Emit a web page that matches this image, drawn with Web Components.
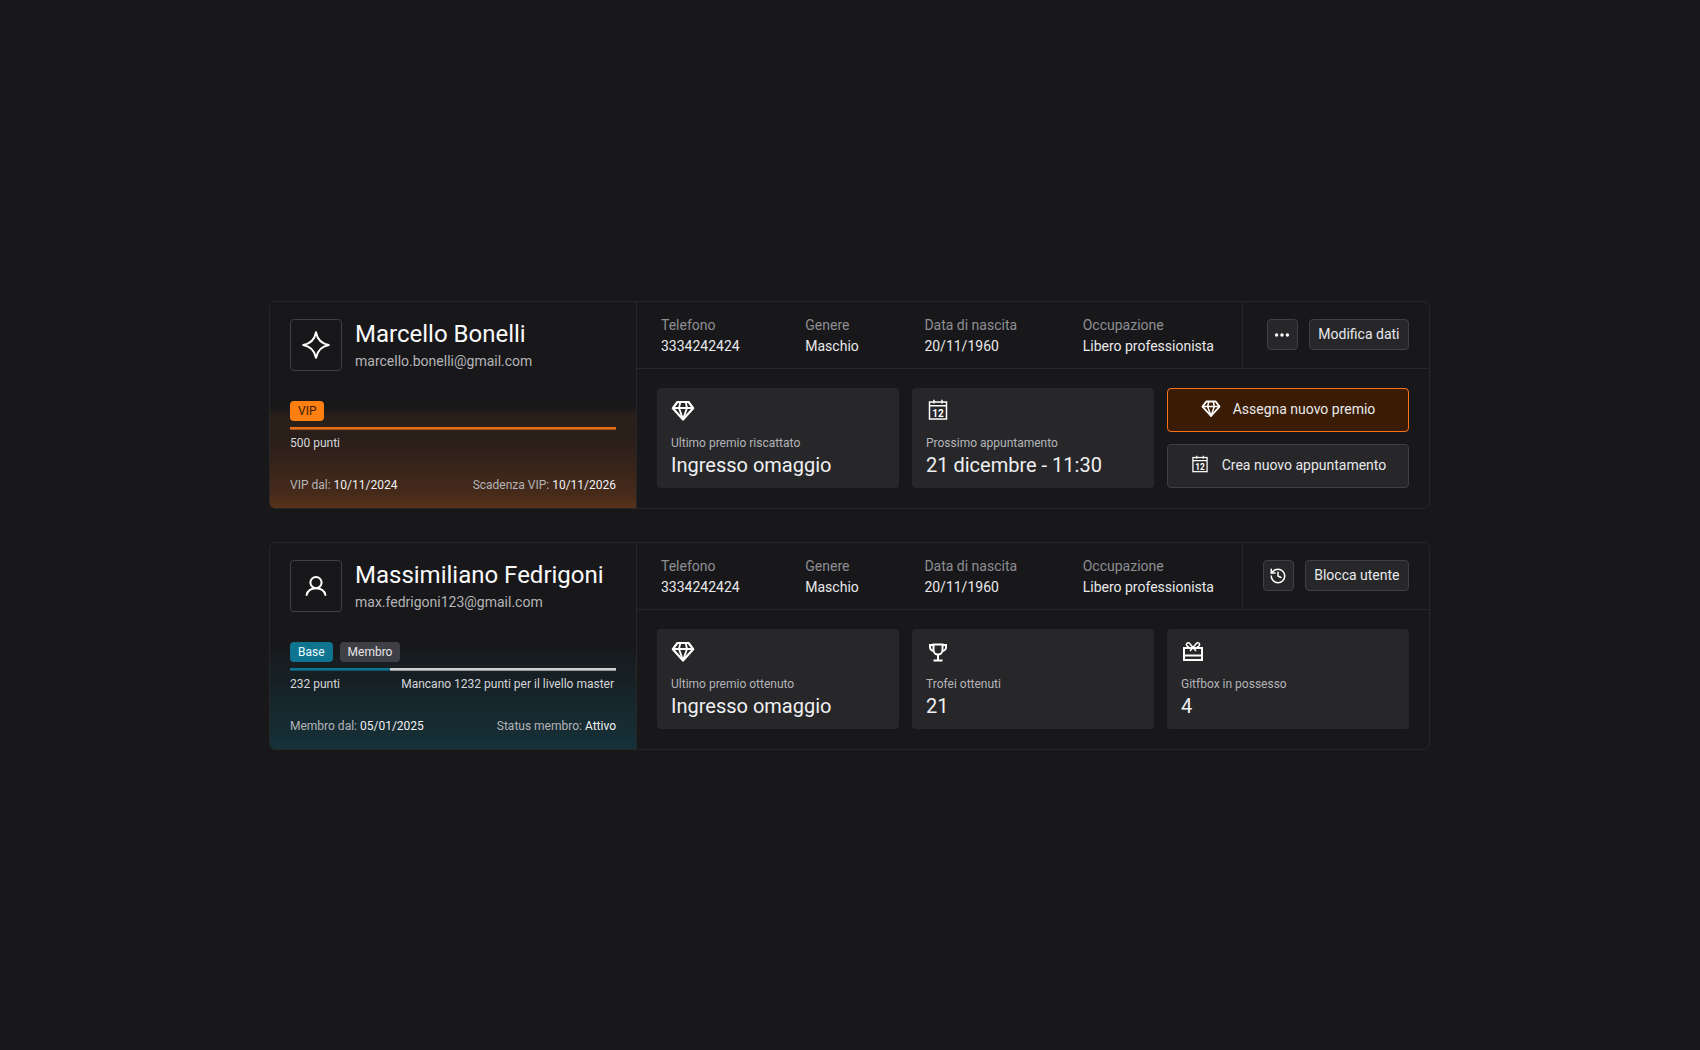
<!doctype html>
<html lang="it">
<head>
<meta charset="utf-8">
<title>Clienti</title>
<style>
html,body{margin:0;height:100%;background:#18181a;}
body{font-family:Roboto,"Liberation Sans",sans-serif;color:#f4f4f5;}
.page{height:1050px;padding-right:1px;box-sizing:border-box;display:flex;flex-direction:column;justify-content:center;align-items:center;gap:33px;}
</style>
</head>
<body>
<main class="page">
  <member-card tone="vip" name="Marcello Bonelli" email="marcello.bonelli@gmail.com" progress="100">
    <ui-icon slot="avatar" name="star" size="32"></ui-icon>
    <ui-badge slot="badges" kind="vip">VIP</ui-badge>
    <span slot="points">500 punti</span>
    <span slot="since">VIP dal: <b>10/11/2024</b></span>
    <span slot="until">Scadenza VIP: <b>10/11/2026</b></span>
    <info-field slot="fields" label="Telefono">3334242424</info-field>
    <info-field slot="fields" label="Genere">Maschio</info-field>
    <info-field slot="fields" label="Data di nascita">20/11/1960</info-field>
    <info-field slot="fields" label="Occupazione">Libero professionista</info-field>
    <ui-button slot="actions" square><ui-icon name="dots" size="18"></ui-icon></ui-button>
    <ui-button slot="actions">Modifica dati</ui-button>
    <stat-tile slot="stats" label="Ultimo premio riscattato" value="Ingresso omaggio"><ui-icon name="diamond" size="24"></ui-icon></stat-tile>
    <stat-tile slot="stats" label="Prossimo appuntamento" value="21 dicembre - 11:30"><ui-icon name="calendar" size="24"></ui-icon></stat-tile>
    <action-stack slot="stats">
      <ui-button large kind="primary"><ui-icon name="diamond" size="20"></ui-icon>Assegna nuovo premio</ui-button>
      <ui-button large><ui-icon name="calendar" size="20"></ui-icon>Crea nuovo appuntamento</ui-button>
    </action-stack>
  </member-card>

  <member-card tone="base" name="Massimiliano Fedrigoni" email="max.fedrigoni123@gmail.com" progress="30.7">
    <ui-icon slot="avatar" name="user" size="32"></ui-icon>
    <ui-badge slot="badges" kind="base">Base</ui-badge>
    <ui-badge slot="badges" kind="member">Membro</ui-badge>
    <span slot="points">232 punti</span>
    <span slot="remaining">Mancano 1232 punti per il livello master</span>
    <span slot="since">Membro dal: <b>05/01/2025</b></span>
    <span slot="until">Status membro: <b>Attivo</b></span>
    <info-field slot="fields" label="Telefono">3334242424</info-field>
    <info-field slot="fields" label="Genere">Maschio</info-field>
    <info-field slot="fields" label="Data di nascita">20/11/1960</info-field>
    <info-field slot="fields" label="Occupazione">Libero professionista</info-field>
    <ui-button slot="actions" square><ui-icon name="history" size="18"></ui-icon></ui-button>
    <ui-button slot="actions">Blocca utente</ui-button>
    <stat-tile slot="stats" label="Ultimo premio ottenuto" value="Ingresso omaggio"><ui-icon name="diamond" size="24"></ui-icon></stat-tile>
    <stat-tile slot="stats" label="Trofei ottenuti" value="21"><ui-icon name="trophy" size="24"></ui-icon></stat-tile>
    <stat-tile slot="stats" label="Gitfbox in possesso" value="4"><ui-icon name="gift" size="24"></ui-icon></stat-tile>
  </member-card>
</main>

<script>
const ICONS = {
  star: '<svg viewBox="0 0 32 32" fill="none" stroke="currentColor" stroke-width="2" stroke-linejoin="round"><path d="M16 3.200Q18 14 28.800 16 18 18 16 28.800 14 18 3.200 16 14 14 16 3.200Z"/></svg>',
  user: '<svg viewBox="0 0 32 32" fill="none" stroke="currentColor" stroke-width="2" stroke-linecap="round"><circle cx="16" cy="12.600" r="5.600"/><path d="M6.600 25C7.600 20.600 11 18.200 16 18.200S24.400 20.600 25.400 25"/></svg>',
  dots: '<svg viewBox="0 0 18 18" fill="currentColor"><circle cx="3.600" cy="9" r="1.700"/><circle cx="9" cy="9" r="1.700"/><circle cx="14.400" cy="9" r="1.700"/></svg>',
  diamond: '<svg viewBox="0 0 24 24" fill="none" stroke="currentColor" stroke-width="2.200" stroke-linejoin="round"><path d="M6.400 3h11.200l4.600 6.200L12 20.400 1.800 9.200z"/><path stroke-width="1.800" d="M1.800 9h20.400M9.300 3 8 9l4 11.400L16 9l-1.300-6"/></svg>',
  calendar: '<svg viewBox="0 0 24 24" fill="none" stroke="currentColor" stroke-width="1.500"><rect x="3.500" y="3" width="17" height="17"/><path d="M3.500 6.800h17M8 .8v3.600M16 .8v3.600"/><text x="12" y="17.600" fill="currentColor" stroke="none" text-anchor="middle" font-family="Roboto,sans-serif" font-size="10" font-weight="700">12</text></svg>',
  trophy: '<svg viewBox="0 0 24 24" fill="none" stroke="currentColor" stroke-width="2"><path d="M7.500 4.500h9v5.500a4.500 4.500 0 0 1-9 0z"/><path d="M7.500 5H4v2.200a3.800 3.800 0 0 0 3.800 3.800M16.500 5H20v2.200a3.800 3.800 0 0 1-3.800 3.800M12 14.500V20.500M7.500 20.500h9"/></svg>',
  gift: '<svg viewBox="0 0 24 24" fill="none" stroke="currentColor" stroke-width="2"><path d="M3 8h18v12H3zM3 15.500h18"/><path stroke-width="1.500" d="M12 7.500 8.500 3.300a1.800 1.800 0 0 0-2.500 2.600L9 8M12 7.500l3.500-4.200a1.800 1.800 0 0 1 2.500 2.600L15 8M12 7.500 9 11M12 7.500 15 11"/></svg>',
  history: '<svg viewBox="0 0 24 24" fill="none" stroke="currentColor" stroke-width="2" stroke-linecap="round" stroke-linejoin="round"><path d="M3 12a9 9 0 1 0 9-9 9.750 9.750 0 0 0-6.740 2.740L3 8"/><path d="M3 3v5h5M12 7v5l4 2"/></svg>'
};

function define(tag, css, html, setup) {
  customElements.define(tag, class extends HTMLElement {
    constructor() {
      super();
      this.attachShadow({mode: 'open'}).innerHTML = `<style>${css}</style>${html}`;
    }
    connectedCallback() { if (setup) setup(this, this.shadowRoot); }
  });
}

define('ui-icon',
  `:host{display:inline-flex;flex:none;width:var(--s,24px);height:var(--s,24px);color:#fff}svg{width:100%;height:100%;display:block;overflow:visible}`,
  `<span style="display:contents"></span>`,
  (el, root) => {
    el.style.setProperty('--s', (el.getAttribute('size') || 24) + 'px');
    root.querySelector('span').innerHTML = ICONS[el.getAttribute('name')] || '';
  });

define('ui-badge',
  `:host{display:inline-flex;align-items:center;height:20px;padding:0 8px;border-radius:4px;font-size:12px;line-height:20px;background:#3f3f46;color:#e4e4e7}
   :host([kind=vip]){background:#ff7f11;color:#3a1c04;padding:0 8px}
   :host([kind=base]){background:#0e7490;color:#ecfeff;}`,
  `<slot></slot>`);

define('ui-button',
  `:host{display:inline-flex;align-items:center;justify-content:center;box-sizing:border-box;height:31px;padding:0 8.500px 2px;gap:12px;
     background:#27272a;border:1px solid #3f3f46;border-radius:4px;font-size:14px;color:#e9e9eb;white-space:nowrap}
   :host([square]){width:31px;padding:0}
   :host([large]){height:44px;width:100%}
   :host([kind=primary]){background:#3a1c04;border-color:#f97316}`,
  `<slot></slot>`);

define('action-stack',
  `:host{display:flex;flex-direction:column;gap:12px}`,
  `<slot></slot>`);

define('info-field',
  `:host{display:block;font-size:14px;line-height:21px;color:#e9e9eb;white-space:nowrap}
   .l{color:#8e8e93}`,
  `<div class="l"></div><slot></slot>`,
  (el, root) => { root.querySelector('.l').textContent = el.getAttribute('label'); });

define('stat-tile',
  `:host{display:flex;flex-direction:column;box-sizing:border-box;height:100px;padding:11px 14px 0;background:#27272a;border-radius:4px}
   .i{height:24px;margin-bottom:12px}
   .l{font-size:12px;line-height:16px;color:#b4b4b8}
   .v{font-size:20px;line-height:28px;color:#f0f0f1;white-space:nowrap}`,
  `<div class="i"><slot></slot></div><div class="l"></div><div class="v"></div>`,
  (el, root) => {
    root.querySelector('.l').textContent = el.getAttribute('label');
    root.querySelector('.v').textContent = el.getAttribute('value');
  });

define('member-card',
  `:host{display:flex;box-sizing:border-box;width:1161px;height:208px;border:1px solid #27272a;border-radius:6px;overflow:hidden;background:#18181a;
     --tone:#e2701a;--glow:rgb(78,46,26);--mid:rgb(56,36,26);--dot:rgba(200,105,30,.4)}
   :host([tone=base]){--tone:#0e7490;--glow:rgb(22,48,56);--mid:rgb(22,40,46);--dot:rgba(30,95,110,.22)}
   .side{position:relative;box-sizing:border-box;flex:none;width:367px;padding:17px 20px 15px;display:flex;flex-direction:column;border-right:1px solid #27272a;
     background:linear-gradient(to bottom,rgba(0,0,0,0) 52%,var(--mid) 80%,var(--glow) 100%)}
   .side::before{content:"";position:absolute;inset:0;pointer-events:none;
     background-image:radial-gradient(circle,var(--dot) .55px,transparent .75px);background-size:2px 2px;
     -webkit-mask-image:linear-gradient(to bottom,transparent 50%,#000 56%,transparent 68%,transparent 93%,#000 100%);
     mask-image:linear-gradient(to bottom,transparent 50%,#000 56%,transparent 68%,transparent 93%,#000 100%)}
   .side>*{position:relative}
   .who{display:flex;gap:13px;align-items:flex-start}
   .avatar{box-sizing:border-box;flex:none;width:52px;height:52px;border:1px solid #3f3f46;border-radius:4px;display:flex;align-items:center;justify-content:center}
   .txt{padding-top:1px}
   .name{font-size:24px;line-height:28px;color:#fafafa;white-space:nowrap}
   .mail{font-size:14px;line-height:20px;margin-top:3px;color:#b4b4b8;white-space:nowrap}
   .badges{display:flex;gap:7px;margin-top:30px}
   .bar{height:3px;margin-top:6px;box-shadow:inset 0 -1px 0 rgba(0,0,0,.28);background:linear-gradient(to right,var(--tone) var(--p),#cfcfd2 var(--p))}
   .pts{display:flex;justify-content:space-between;margin-top:5px;padding-right:2px;font-size:12px;line-height:16px;color:#d6d6da}
   .foot{display:flex;justify-content:space-between;margin-top:auto;font-size:12px;line-height:16px;color:#b4b4b8}
   ::slotted([slot=since]),::slotted([slot=until]){white-space:nowrap}
   .main{flex:1;min-width:0;display:flex;flex-direction:column}
   .top{display:flex;height:67px;box-sizing:border-box;border-bottom:1px solid #27272a}
   .fields{flex:1;display:flex;justify-content:space-between;align-items:center;padding:2px 28px 0 24px}
   .actions{box-sizing:border-box;flex:none;width:187px;padding:0 20px 0 19px;display:flex;justify-content:flex-end;align-items:center;gap:11px;border-left:1px solid #27272a}
   .stats{flex:1;display:grid;grid-template-columns:repeat(3,1fr);gap:13px;padding:19px 20px;align-items:start}`,
  `<section class="side">
     <div class="who">
       <div class="avatar"><slot name="avatar"></slot></div>
       <div class="txt"><div class="name"></div><div class="mail"></div></div>
     </div>
     <div class="badges"><slot name="badges"></slot></div>
     <div class="bar"></div>
     <div class="pts"><slot name="points"></slot><slot name="remaining"></slot></div>
     <div class="foot"><slot name="since"></slot><slot name="until"></slot></div>
   </section>
   <section class="main">
     <div class="top">
       <div class="fields"><slot name="fields"></slot></div>
       <div class="actions"><slot name="actions"></slot></div>
     </div>
     <div class="stats"><slot name="stats"></slot></div>
   </section>`,
  (el, root) => {
    root.querySelector('.name').textContent = el.getAttribute('name');
    root.querySelector('.mail').textContent = el.getAttribute('email');
    root.querySelector('.bar').style.setProperty('--p', el.getAttribute('progress') + '%');
  });
</script>
<style>
member-card b{font-weight:400;color:#f0f0f1}
</style>
</body>
</html>
